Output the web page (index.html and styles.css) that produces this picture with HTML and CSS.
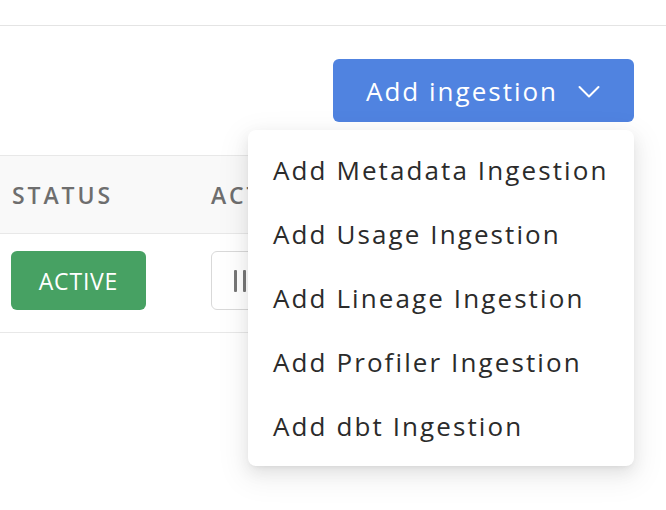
FILE: index.html
```html
<!DOCTYPE html>
<html>
<head>
<meta charset="utf-8">
<link rel="stylesheet" href="styles.css">
</head>
<body>
<div class="topbar"></div>
<div class="toolbar">
  <div class="add-wrap">
    <button class="add-btn">
      <span>Add ingestion</span>
      <svg class="chev" width="22" height="14" viewBox="0 0 22 14"><path d="M1.5 2 L11 11.5 L20.5 2" fill="none" stroke="#fff" stroke-width="2" stroke-linecap="round" stroke-linejoin="round"/></svg>
    </button>
    <div class="menu">
      <div class="menu-item">Add Metadata Ingestion</div>
      <div class="menu-item">Add Usage Ingestion</div>
      <div class="menu-item">Add Lineage Ingestion</div>
      <div class="menu-item">Add Profiler Ingestion</div>
      <div class="menu-item">Add dbt Ingestion</div>
    </div>
  </div>
</div>
<div class="table">
  <div class="thead">
    <div class="cell c-status">STATUS</div>
    <div class="cell c-actions">ACTIONS</div>
  </div>
  <div class="trow">
    <div class="cell c-status"><span class="badge">ACTIVE</span></div>
    <div class="cell c-actions">
      <button class="icon-btn">
        <svg width="14" height="24" viewBox="0 0 14 24"><rect x="1" y="1" width="3" height="22" rx="1" fill="#777"/><rect x="10" y="1" width="3" height="22" rx="1" fill="#777"/></svg>
      </button>
    </div>
  </div>
</div>
</body>
</html>
```
FILE: styles.css
```css
* { box-sizing: border-box; }
body {
  margin: 0;
  background: #fff;
  font-family: "Open Sans", "Noto Sans", sans-serif;
  width: 666px;
  height: 510px;
  overflow: hidden;
}
.topbar {
  height: 26px;
  border-bottom: 1px solid #e4e4e4;
}
.toolbar {
  display: flex;
  justify-content: flex-end;
  padding: 33px 32px 0 0;
}
.add-wrap {
  position: relative;
}
.add-btn {
  display: flex;
  align-items: center;
  gap: 20px;
  width: 301px;
  height: 63px;
  padding: 0 0 0 33px;
  border: none;
  border-radius: 6px;
  background: #5083e0;
  color: #fff;
  font-family: "Open Sans", sans-serif;
  font-size: 26px;
  letter-spacing: 2px;
}
.chev { margin-top: 2px; }
.menu {
  position: absolute;
  right: 0;
  top: 71px;
  width: 386px;
  padding: 8px 0;
  background: #fff;
  border-radius: 8px;
  box-shadow: 0 6px 16px rgba(0,0,0,0.08), 0 3px 6px -4px rgba(0,0,0,0.12), 0 9px 28px 8px rgba(0,0,0,0.05);
  z-index: 2;
}
.menu-item {
  height: 64px;
  display: flex;
  align-items: center;
  padding-left: 25px;
  font-size: 26px;
  color: #2b2b2b;
  letter-spacing: 2.1px;
}
.table {
  margin-top: 33px;
  width: 630px;
  border-top: 1px solid #e8e8e8;
}
.thead {
  display: flex;
  height: 78px;
  background: #f9f9f9;
  border-bottom: 1px solid #e8e8e8;
  align-items: center;
}
.trow {
  display: flex;
  height: 99px;
  align-items: flex-start;
  padding-top: 17px;
  border-bottom: 1px solid #e8e8e8;
}
.cell.c-status { width: 200px; padding-left: 12px; }
.cell.c-actions { padding-left: 0; margin-left: 11px; }
.thead .cell {
  font-size: 23px;
  font-weight: 600;
  color: #6e6e6e;
  letter-spacing: 2.9px;
}
.badge {
  display: inline-flex;
  align-items: center;
  justify-content: center;
  width: 135px;
  height: 59px;
  margin-left: -1px;
  border-radius: 6px;
  background: #47a163;
  color: #fff;
  font-size: 23px;
  letter-spacing: 0.8px;
}
.icon-btn {
  display: flex;
  align-items: center;
  padding: 0 0 0 21px;
  width: 60px;
  height: 59px;
  border: 1px solid #d9d9d9;
  border-radius: 6px;
  background: #fff;
}
```
